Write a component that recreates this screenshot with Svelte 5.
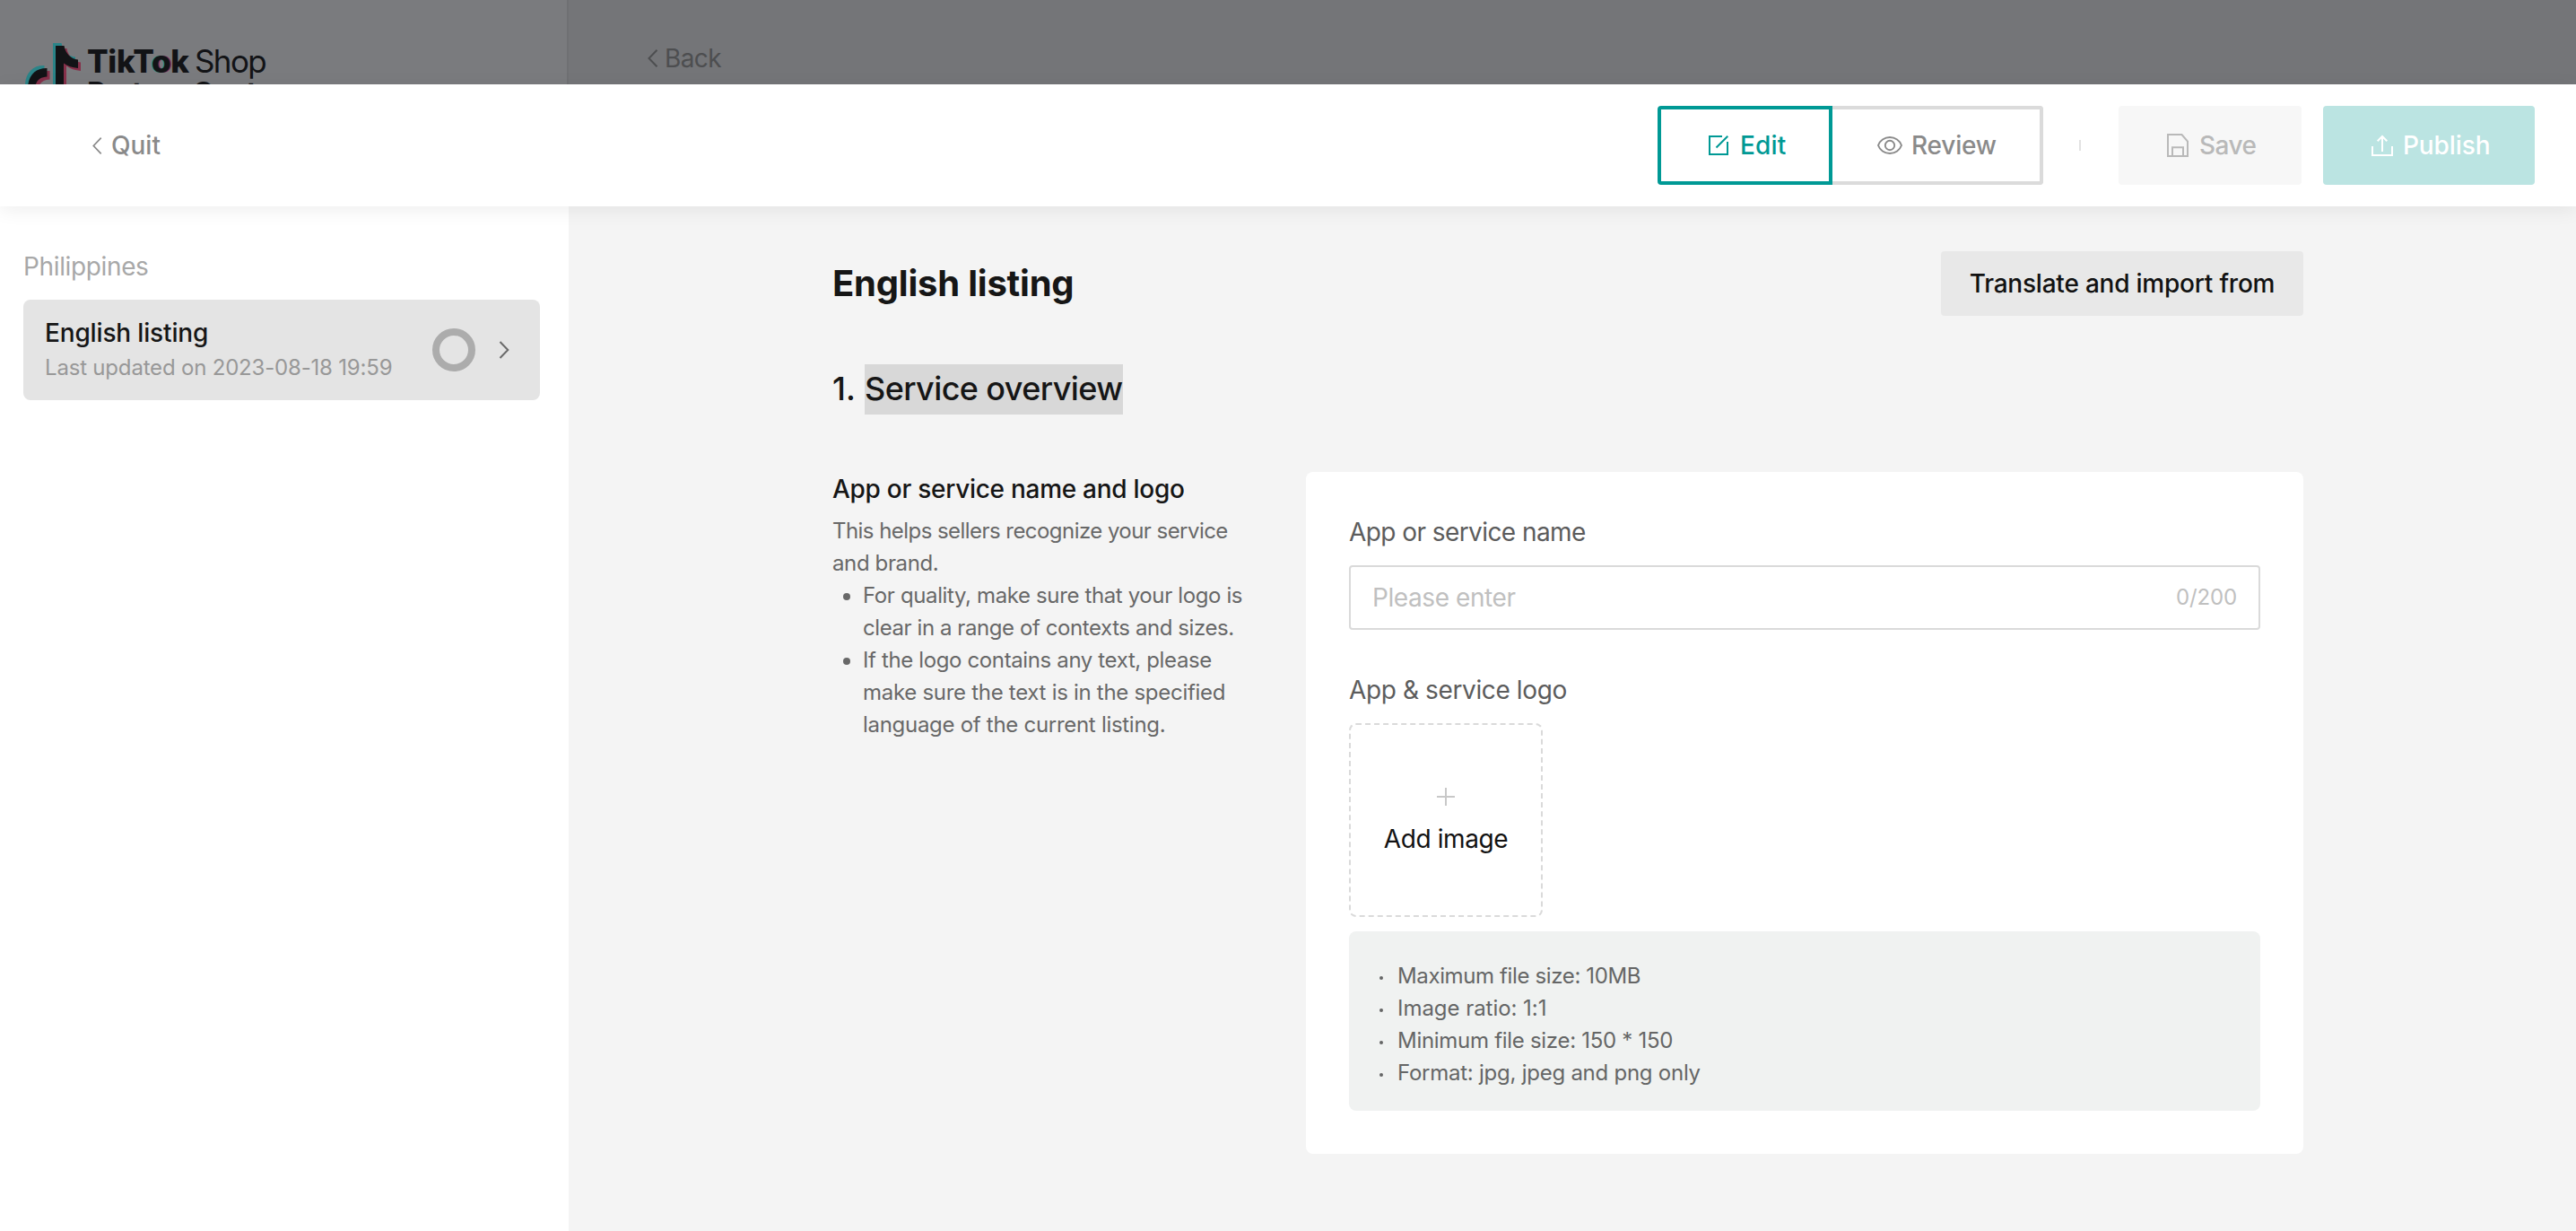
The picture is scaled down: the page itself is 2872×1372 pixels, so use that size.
<script>
  const tips = [
    { text: 'For quality, make sure that your logo is', cls: 't36' },
    { text: 'clear in a range of contexts and sizes.', cls: 't42' }
  ];
  const tips2 = [
    { text: 'If the logo contains any text, please', cls: 't36' },
    { text: 'make sure the text is in the specified', cls: 't29' },
    { text: 'language of the current listing.', cls: 't29' }
  ];
  const specs = [
    { text: 'Maximum file size: 10MB', cls: 't36' },
    { text: 'Image ratio: 1:1', cls: 't4' },
    { text: 'Minimum file size: 150 * 150', cls: 't29' },
    { text: 'Format: jpg, jpeg and png only', cls: 't25' }
  ];
</script>

<div class="page">
  <div class="backdrop">
    <div class="brand">
      <svg class="note" width="66" height="50" viewBox="27 44 66 50">
        <defs>
          <g id="note">
            <path d="M62 51H71.5C73 60 79 65.5 87 66.5V76C80.500 75.500 75 73.500 71 70.500V100H62Z" />
            <path d="M52.500 76V85.500C44 86 39.500 90 39 100H31C30.500 84 40 75.500 52.500 76Z" />
          </g>
        </defs>
        <use href="#note" x="-3" y="-3" fill="#2b8488" />
        <use href="#note" x="3" y="3" fill="#86304a" />
        <use href="#note" fill="#121316" />
      </svg>
      <div class="words">
        <div class="word-row"><span class="tiktok">TikT<span class="o">o</span>k</span><span class="shop">Shop</span></div>
        <div class="partner">Partner Center</div>
      </div>
    </div>
    <div class="behind">
      <svg width="12" height="20" viewBox="0 0 12 20" fill="none" stroke="currentColor" stroke-width="2"><path d="M10.500 .7L1.500 10L10.500 19.300" /></svg>
      <span>Back</span>
    </div>
  </div>

  <header class="bar">
    <div class="quit">
      <svg width="11" height="19" viewBox="0 0 11 19" fill="none" stroke="currentColor" stroke-width="1.700"><path d="M9.700 .7L1.300 9.500L9.700 18.300" /></svg>
      <span>Quit</span>
    </div>
    <div class="tabs">
      <button class="tab edit">
        <svg width="22" height="22" viewBox="0 0 22 22" fill="none" stroke="currentColor" stroke-width="2"><path d="M15 1H1V21H21V7M8.500 13.500L21.300 .7" /></svg>
        <span>Edit</span>
      </button>
      <button class="tab review">
        <svg width="28" height="22" viewBox="0 0 28 22" fill="none" stroke="currentColor" stroke-width="1.900"><path d="M1 11C2.800 5.800 8 2 14 2S25.200 5.800 27 11C25.200 16.200 20 20 14 20S2.800 16.200 1 11Z" /><circle cx="14" cy="11" r="5.200" /></svg>
        <span>Review</span>
      </button>
    </div>
    <i class="sep"></i>
    <button class="btn save">
      <svg width="24" height="26" viewBox="0 0 24 26" fill="none" stroke="currentColor" stroke-width="2"><path d="M1 1H16.500L23 8.500V25H1ZM6 25V15.300H18V25" /></svg>
      <span>Save</span>
    </button>
    <button class="btn publish">
      <svg width="24" height="24" viewBox="0 0 24 24" fill="none" stroke="currentColor" stroke-width="2"><path d="M1 13V23H23V13M12 19V2.500M6.700 7.300L12 2L17.300 7.300" /></svg>
      <span>Publish</span>
    </button>
  </header>

  <div class="body">
    <aside>
      <div class="region">Philippines</div>
      <div class="entry">
        <div class="entry-text">
          <div class="entry-name">English listing</div>
          <div class="entry-date">Last updated on 2023-08-18 19:59</div>
        </div>
        <div class="ring"></div>
        <svg class="go" width="12" height="20" viewBox="0 0 12 20" fill="none" stroke="#6a6a6a" stroke-width="2"><path d="M1.500 1L10.300 10L1.500 19" /></svg>
      </div>
    </aside>

    <main>
      <div class="top">
        <h1>English listing</h1>
        <button class="translate">Translate and import from</button>
      </div>
      <h2><span class="num">1.</span><span class="marked">Service overview</span></h2>
      <div class="cols">
        <section class="help">
          <h3>App or service name and logo</h3>
          <p><span class="t55">This helps sellers recognize your service</span><br /><span class="t36">and brand.</span></p>
          <ul>
            <li>{#each tips as t}<div class={t.cls}>{t.text}</div>{/each}</li>
            <li>{#each tips2 as t}<div class={t.cls}>{t.text}</div>{/each}</li>
          </ul>
        </section>
        <section class="card">
          <div class="label name">App or service name</div>
          <div class="field"><span class="ph">Please enter</span><span class="count">0/200</span></div>
          <div class="label logo">App &amp; service logo</div>
          <div class="upload">
            <svg width="20" height="20" viewBox="0 0 20 20" stroke="#c8c8c8" stroke-width="2"><path d="M10 0V20M0 10H20" /></svg>
            <span>Add image</span>
          </div>
          <ul class="specs">
            {#each specs as s}<li class={s.cls}>{s.text}</li>{/each}
          </ul>
        </section>
      </div>
    </main>
  </div>
</div>

<style>
  :global(body) { background: #fff; overflow: hidden; }
  .page { width: 2872px; height: 1372px; display: flex; flex-direction: column; overflow: hidden; font-family: Inter, Roboto, sans-serif; font-size: 28px; color: #161616; }
  .page * { box-sizing: border-box; }
  svg { display: block; flex: none; overflow: visible; }
  button { font: inherit; border: 0; margin: 0; padding: 0; background: none; white-space: nowrap; }
  ul, p, h1, h2, h3 { margin: 0; padding: 0; }
  li { list-style: none; }

  .backdrop { flex: none; height: 94px; display: flex; background: #747578; overflow: hidden; }
  .brand { width: 634px; height: 94px; background: #7a7b7e; border-right: 2px solid #6f7073; display: flex; padding: 44px 0 0 27px; color: #121316; }
  .note { overflow: hidden; }
  .words { padding-left: 4px; }
  .word-row { display: flex; height: 48px; line-height: 48px; align-items: flex-start; }
  .tiktok { width: 120px; font-size: 35px; font-weight: 800; letter-spacing: -.35px; white-space: nowrap; }
  .o { text-shadow: -1.500px 0 #2b8488, 1.500px 0 #86304a; }
  .shop { font-size: 35px; letter-spacing: -1.600px; }
  .partner { font-size: 32px; font-weight: 700; line-height: 24px; height: 24px; white-space: nowrap; letter-spacing: -.8px; }
  .behind { display: flex; align-items: center; height: 94px; padding: 36px 0 0 88px; gap: 7px; color: #4d4e50; letter-spacing: -.6px; line-height: 40px; align-self: flex-start; }

  .bar { position: relative; flex: none; height: 136px; display: flex; align-items: center; background: #fff; box-shadow: 0 4px 20px rgba(0, 0, 0, .07); padding-right: 46px; font-weight: 500; }
  .quit { display: flex; align-items: center; gap: 10px; padding-left: 103px; color: #8a8a8a; margin-right: auto; }
  .tabs { display: flex; width: 430px; height: 88px; }
  .tab { display: flex; align-items: center; height: 88px; border: 4px solid #dbdbdb; }
  .edit { width: 195px; border-color: #009995; border-radius: 4px 0 0 4px; color: #009995; padding-left: 53px; gap: 13px; letter-spacing: .2px; }
  .review { width: 235px; border-left: 0; border-radius: 0 4px 4px 0; color: #8a8a8a; padding-left: 50px; gap: 10px; letter-spacing: -.2px; }
  .sep { width: 2px; height: 12px; margin: 0 42px 0 40px; background: #e2e2e2; }
  .btn { display: flex; align-items: center; height: 88px; border-radius: 4px; padding-left: 54px; }
  .save { width: 204px; background: #f7f7f7; color: #b9b9b9; gap: 12px; letter-spacing: -.5px; margin-right: 24px; }
  .publish { width: 236px; background: #bbe4e2; color: #fff; gap: 11px; letter-spacing: -.1px; }

  .body { flex: 1; display: flex; }
  aside { width: 634px; padding: 47px 32px 0 26px; background: #fff; }
  .region { line-height: 40px; color: #a8a8a8; letter-spacing: -.36px; margin-bottom: 17px; }
  .entry { display: flex; align-items: center; height: 112px; border-radius: 8px; background: #e4e4e4; padding: 0 34px 0 24px; }
  .entry-text { flex: 1; align-self: flex-start; padding-top: 19px; }
  .entry-name { font-weight: 500; line-height: 36px; letter-spacing: -.16px; }
  .entry-date { font-size: 24px; line-height: 32px; margin-top: 5px; color: #989898; letter-spacing: -.19px; white-space: nowrap; }
  .ring { width: 48px; height: 48px; border: 8px solid #acacac; border-radius: 50%; margin-right: 26px; }

  main { flex: 1; background: #f4f4f4; padding: 50px 304px 0 294px; }
  .top { display: flex; justify-content: space-between; align-items: center; height: 72px; }
  h1 { font-size: 40px; font-weight: 700; letter-spacing: -.22px; line-height: 56px; }
  .translate { width: 404px; height: 72px; border-radius: 4px; background: #e8e8e8; color: #121212; font-weight: 500; letter-spacing: -.22px; line-height: 36px; padding-bottom: 1px; }
  h2 { display: flex; margin-top: 54px; font-size: 36px; font-weight: 500; line-height: 54px; height: 56px; }
  .num { width: 36px; }
  .marked { width: 288px; height: 56px; background: #d8d8d8; letter-spacing: -.6px; white-space: nowrap; }
  .cols { display: flex; justify-content: space-between; margin-top: 64px; }
  .help { width: 480px; font-size: 24px; line-height: 36px; color: #686868; white-space: nowrap; }
  h3 { font-size: 28px; font-weight: 500; line-height: 38px; letter-spacing: -.28px; color: #161616; margin-bottom: 10px; }
  .help li { position: relative; padding-left: 34px; }
  .help li::before { content: ''; position: absolute; left: 12px; top: 15px; width: 8px; height: 8px; border-radius: 50%; background: #686868; }
  .t55 { letter-spacing: -.55px; }
  .t42 { letter-spacing: -.42px; }
  .t36 { letter-spacing: -.37px; }
  .t29 { letter-spacing: -.29px; }
  .t25 { letter-spacing: -.25px; }
  .t4 { letter-spacing: -.04px; }

  .card { width: 1112px; height: 760px; background: #fff; border-radius: 8px; padding: 47px 48px 48px; }
  .label { line-height: 40px; color: #5c5c5c; margin-bottom: 17px; }
  .name { letter-spacing: -.57px; }
  .logo { margin-top: 47px; letter-spacing: -.38px; }
  .field { height: 72px; border: 2px solid #dadada; border-radius: 4px; display: flex; justify-content: space-between; align-items: center; padding: 0 24px; color: #c0c0c0; line-height: 36px; }
  .ph { letter-spacing: -.42px; }
  .count { font-size: 24px; letter-spacing: -.15px; }
  .upload { width: 216px; height: 216px; border: 2px dashed #dadada; border-radius: 8px; display: flex; flex-direction: column; align-items: center; padding-top: 70px; color: #121212; letter-spacing: -.4px; }
  .upload span { line-height: 36px; margin-top: 19px; }
  .specs { margin-top: 16px; height: 200px; border-radius: 8px; background: #f0f2f1; padding: 32px 0 0 54px; font-size: 24px; line-height: 36px; color: #656666; }
  .specs li { position: relative; }
  .specs li::before { content: ''; position: absolute; left: -20px; top: 18px; width: 4px; height: 4px; border-radius: 50%; background: #656666; }
</style>
